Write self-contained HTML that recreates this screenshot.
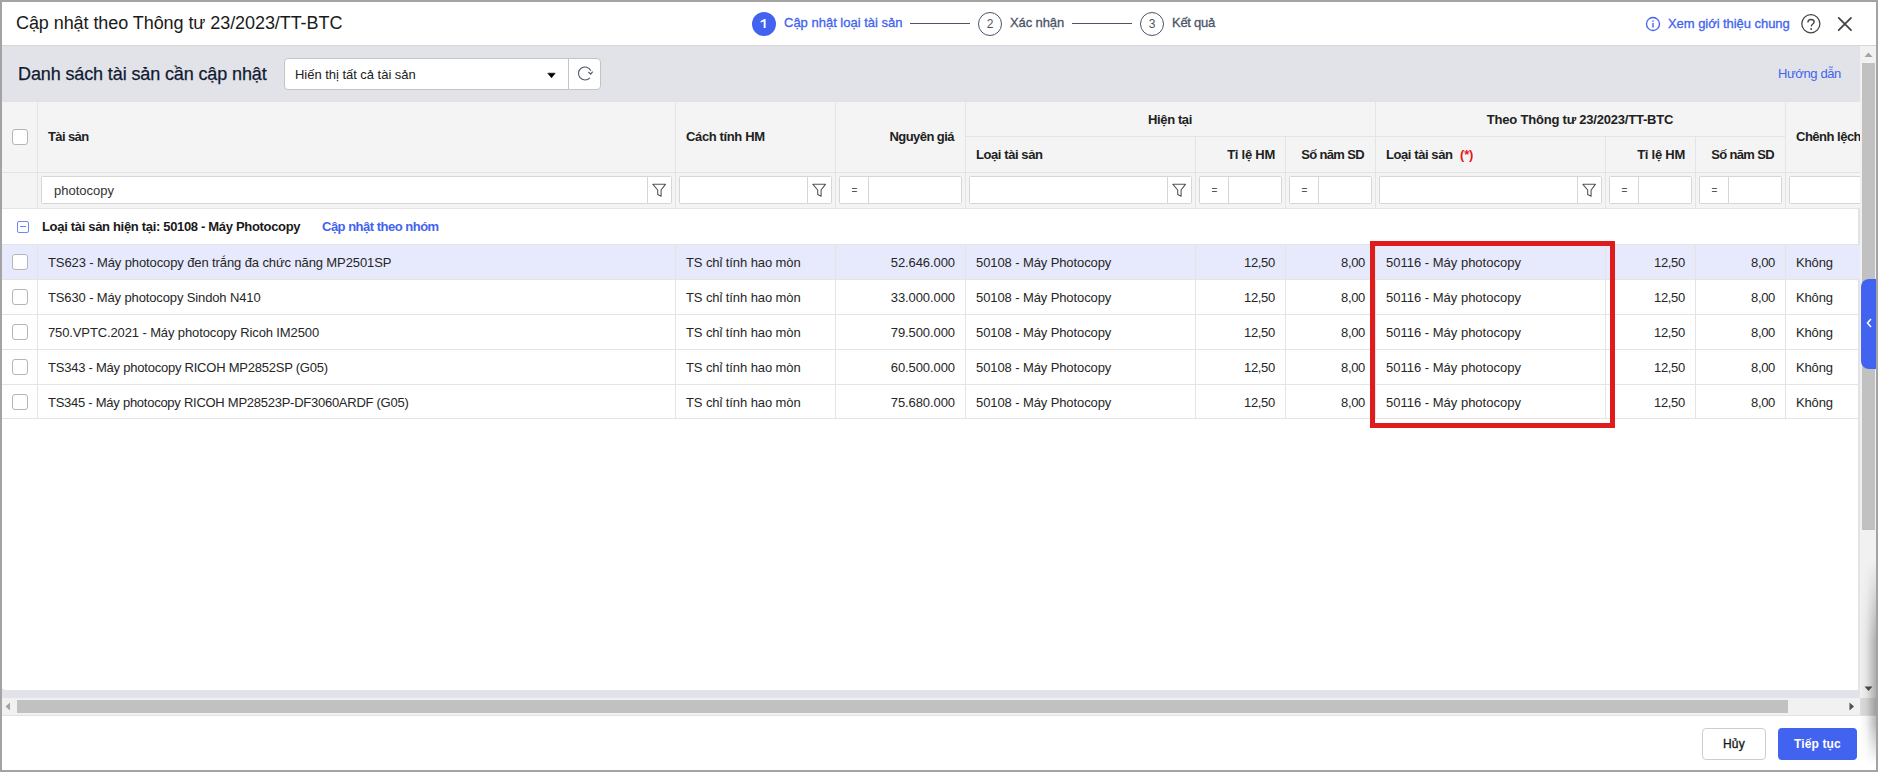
<!DOCTYPE html>
<html><head><meta charset="utf-8"><style>
html,body{margin:0;padding:0;}
body{width:1878px;height:772px;position:relative;overflow:hidden;background:#a3a3a3;font-family:'Liberation Sans', sans-serif;}
.t{position:absolute;white-space:nowrap;}
</style></head><body>

<div style="position:absolute;left:2px;top:2px;width:1874px;height:768px;background:#fff;"></div>
<div style="position:absolute;left:2px;top:45px;width:1874px;height:1px;background:#d6d6d6;"></div>
<div style="position:absolute;left:2px;top:46px;width:1858px;height:652px;background:#e1e3e8;"></div>
<div class="t" style="left:16px;top:14.36px;font-size:18px;line-height:18px;font-weight:400;color:#1a1a1a;letter-spacing:-0.07px;">Cập nhật theo Thông tư 23/2023/TT-BTC</div>
<div style="position:absolute;left:752px;top:12px;width:24px;height:24px;border-radius:50%;background:#4263ef;"></div>
<svg style="position:absolute;left:752px;top:12px" width="24" height="24" viewBox="752 12 24 24"><path d="M760.6 21.1 L764.3 19 L765.6 19 L765.6 27.9 L763.7 27.9 L763.7 21.4 L760.6 22.6 Z" fill="#fff"/></svg>
<div class="t" style="left:784px;top:15.80px;font-size:13px;line-height:13px;font-weight:400;color:#4263ef;-webkit-text-stroke:0.3px #4263ef;">Cập nhật loại tài sản</div>
<div style="position:absolute;left:910px;top:23px;width:60px;height:1px;background:#4b5566;"></div>
<div style="position:absolute;left:978px;top:12px;width:22px;height:22px;border-radius:50%;border:1px solid #4b5566;"></div>
<div class="t" style="left:990px;transform:translateX(-50%);top:17.84px;font-size:12px;line-height:12px;font-weight:400;color:#4b5566;">2</div>
<div class="t" style="left:1010px;top:15.80px;font-size:13px;line-height:13px;font-weight:400;color:#4b5468;letter-spacing:-0.1px;-webkit-text-stroke:0.3px #4b5468;">Xác nhận</div>
<div style="position:absolute;left:1072px;top:23px;width:60px;height:1px;background:#4b5566;"></div>
<div style="position:absolute;left:1140px;top:12px;width:22px;height:22px;border-radius:50%;border:1px solid #4b5566;"></div>
<div class="t" style="left:1152px;transform:translateX(-50%);top:17.84px;font-size:12px;line-height:12px;font-weight:400;color:#4b5566;">3</div>
<div class="t" style="left:1172px;top:15.80px;font-size:13px;line-height:13px;font-weight:400;color:#4b5468;letter-spacing:-0.27px;-webkit-text-stroke:0.3px #4b5468;">Kết quả</div>
<svg style="position:absolute;left:1645px;top:16px" width="16" height="16" viewBox="0 0 16 16"><circle cx="8" cy="8" r="6.5" fill="none" stroke="#4263ef" stroke-width="1.3"/><rect x="7.3" y="7" width="1.4" height="4.5" fill="#4263ef"/><circle cx="8" cy="5" r="0.85" fill="#4263ef"/></svg>
<div class="t" style="left:1668px;top:16.80px;font-size:13px;line-height:13px;font-weight:400;color:#4263ef;letter-spacing:-0.05px;-webkit-text-stroke:0.3px #4263ef;">Xem giới thiệu chung</div>
<svg style="position:absolute;left:1800px;top:13px" width="22" height="22" viewBox="0 0 22 22"><circle cx="10.85" cy="10.75" r="9.05" fill="none" stroke="#444" stroke-width="1.3"/><path d="M7.9 9.6 C7.9 7.6 9.3 6.5 11 6.5 C12.8 6.5 14.1 7.6 14.1 9 C14.1 10.9 11.3 11.1 11.3 13.4" fill="none" stroke="#444" stroke-width="1.35"/><circle cx="11.15" cy="16" r="0.95" fill="#444"/></svg>
<svg style="position:absolute;left:1836px;top:16px" width="18" height="16" viewBox="0 0 18 16"><path d="M2.7 1.9 L15.0 14.2 M15.0 1.9 L2.7 14.2" stroke="#444" stroke-width="1.8" stroke-linecap="round"/></svg>
<div class="t" style="left:18px;top:64.56px;font-size:18px;line-height:18px;font-weight:400;color:#111a33;letter-spacing:-0.12px;-webkit-text-stroke:0.25px #111a33;">Danh sách tài sản cần cập nhật</div>
<div style="position:absolute;left:284px;top:58px;width:315px;height:30px;border:1px solid #c4c4c4;border-radius:4px;background:#fff;"></div>
<div style="position:absolute;left:568px;top:59px;width:1px;height:30px;background:#c4c4c4;"></div>
<div class="t" style="left:295px;top:68.10px;font-size:13px;line-height:13px;font-weight:400;color:#212121;letter-spacing:-0.03px;">Hiến thị tất cả tài sản</div>
<svg style="position:absolute;left:546px;top:72px" width="11" height="7" viewBox="0 0 11 7"><path d="M1.8 1.2 L9.2 1.2 L5.5 5.8 Z" fill="#000" stroke="#000" stroke-width="0.6" stroke-linejoin="round"/></svg>
<svg style="position:absolute;left:576px;top:65px" width="18" height="18" viewBox="0 0 18 18"><path d="M13.83 12.85 A6.5 6.5 0 1 1 14.89 5.75" fill="none" stroke="#4b5566" stroke-width="1.1"/><path d="M12.4 7 L14.7 9.2 L16.7 6.6" fill="none" stroke="#4b5566" stroke-width="1.1"/></svg>
<div class="t" style="left:1778px;top:66.70px;font-size:13px;line-height:13px;font-weight:400;color:#4263ef;letter-spacing:-0.38px;">Hướng dẫn</div>
<div style="position:absolute;left:2px;top:102px;width:1858px;height:588px;background:#fff;border-radius:0 0 4px 4px;overflow:hidden;">
<div style="position:absolute;left:1856px;top:107px;width:2px;height:481px;background:#e1e3e8;"></div>
<div style="position:absolute;left:0px;top:0px;width:1858px;height:106px;background:#f4f4f4;"></div>
<div style="position:absolute;left:0px;top:70px;width:1858px;height:1px;background:#e4e4e4;"></div>
<div style="position:absolute;left:0px;top:106px;width:1858px;height:1px;background:#e4e4e4;"></div>
<div style="position:absolute;left:963px;top:34px;width:820px;height:1px;background:#e4e4e4;"></div>
<div style="position:absolute;left:35px;top:0px;width:1px;height:106px;background:#e4e4e4;"></div>
<div style="position:absolute;left:673px;top:0px;width:1px;height:106px;background:#e4e4e4;"></div>
<div style="position:absolute;left:833px;top:0px;width:1px;height:106px;background:#e4e4e4;"></div>
<div style="position:absolute;left:963px;top:0px;width:1px;height:106px;background:#e4e4e4;"></div>
<div style="position:absolute;left:1193px;top:35px;width:1px;height:71px;background:#e4e4e4;"></div>
<div style="position:absolute;left:1283px;top:35px;width:1px;height:71px;background:#e4e4e4;"></div>
<div style="position:absolute;left:1373px;top:0px;width:1px;height:106px;background:#e4e4e4;"></div>
<div style="position:absolute;left:1603px;top:35px;width:1px;height:71px;background:#e4e4e4;"></div>
<div style="position:absolute;left:1693px;top:35px;width:1px;height:71px;background:#e4e4e4;"></div>
<div style="position:absolute;left:1783px;top:0px;width:1px;height:106px;background:#e4e4e4;"></div>
<div style="position:absolute;left:10px;top:27px;width:14px;height:14px;border:1px solid #b5b5b5;border-radius:3px;background:#fff;"></div>
<div class="t" style="left:46px;top:28.00px;font-size:13px;line-height:13px;font-weight:700;color:#212121;letter-spacing:-0.6px;">Tài sản</div>
<div class="t" style="left:684px;top:28.40px;font-size:13px;line-height:13px;font-weight:700;color:#212121;letter-spacing:-0.37px;">Cách tính HM</div>
<div class="t" style="right:906px;top:28.40px;font-size:13px;line-height:13px;font-weight:700;color:#212121;letter-spacing:-0.55px;">Nguyên giá</div>
<div class="t" style="left:1168px;transform:translateX(-50%);top:11.30px;font-size:13px;line-height:13px;font-weight:700;color:#212121;letter-spacing:-0.4px;">Hiện tại</div>
<div class="t" style="left:974px;top:46.40px;font-size:13px;line-height:13px;font-weight:700;color:#212121;letter-spacing:-0.42px;">Loại tài sản</div>
<div class="t" style="right:585px;top:46.40px;font-size:13px;line-height:13px;font-weight:700;color:#212121;letter-spacing:-0.25px;">Tỉ lệ HM</div>
<div class="t" style="right:496px;top:46.40px;font-size:13px;line-height:13px;font-weight:700;color:#212121;letter-spacing:-0.65px;">Số năm SD</div>
<div class="t" style="left:1578px;transform:translateX(-50%);top:11.30px;font-size:13px;line-height:13px;font-weight:700;color:#212121;letter-spacing:-0.21px;">Theo Thông tư 23/2023/TT-BTC</div>
<div class="t" style="left:1384px;top:46.40px;font-size:13px;line-height:13px;font-weight:700;color:#212121;letter-spacing:-0.42px;">Loại tài sản</div>
<div class="t" style="left:1458px;top:46.40px;font-size:13px;line-height:13px;font-weight:700;color:#e8141b;letter-spacing:-0.2px;">(*)</div>
<div class="t" style="right:175px;top:46.40px;font-size:13px;line-height:13px;font-weight:700;color:#212121;letter-spacing:-0.25px;">Tỉ lệ HM</div>
<div class="t" style="right:86px;top:46.40px;font-size:13px;line-height:13px;font-weight:700;color:#212121;letter-spacing:-0.65px;">Số năm SD</div>
<div class="t" style="left:1794px;top:28.00px;font-size:13px;line-height:13px;font-weight:700;color:#212121;letter-spacing:-0.5px;">Chênh lệch</div>
<div style="position:absolute;left:39px;top:74px;width:629px;height:26px;border:1px solid #d6d6d6;border-radius:1.5px;background:#fff;"></div>
<div style="position:absolute;left:645px;top:75px;width:1px;height:26px;background:#d6d6d6;"></div>
<svg style="position:absolute;left:650px;top:80px" width="16" height="16" viewBox="0 0 16 16"><path d="M0.9 2.3 L13.4 2.3 L9.1 8 L9.1 14.2 L5.7 12.6 L5.7 8 Z" fill="none" stroke="#555" stroke-width="1.1" stroke-linejoin="round"/></svg>
<div style="position:absolute;left:677px;top:74px;width:151px;height:26px;border:1px solid #d6d6d6;border-radius:1.5px;background:#fff;"></div>
<div style="position:absolute;left:805px;top:75px;width:1px;height:26px;background:#d6d6d6;"></div>
<svg style="position:absolute;left:810px;top:80px" width="16" height="16" viewBox="0 0 16 16"><path d="M0.9 2.3 L13.4 2.3 L9.1 8 L9.1 14.2 L5.7 12.6 L5.7 8 Z" fill="none" stroke="#555" stroke-width="1.1" stroke-linejoin="round"/></svg>
<div style="position:absolute;left:837px;top:74px;width:121px;height:26px;border:1px solid #d6d6d6;border-radius:1.5px;background:#fff;"></div>
<div style="position:absolute;left:866px;top:75px;width:1px;height:26px;background:#d6d6d6;"></div>
<div class="t" style="left:852.3px;transform:translateX(-50%);top:84.13px;font-size:10px;line-height:10px;font-weight:400;color:#555;">=</div>
<div style="position:absolute;left:967px;top:74px;width:221px;height:26px;border:1px solid #d6d6d6;border-radius:1.5px;background:#fff;"></div>
<div style="position:absolute;left:1165px;top:75px;width:1px;height:26px;background:#d6d6d6;"></div>
<svg style="position:absolute;left:1170px;top:80px" width="16" height="16" viewBox="0 0 16 16"><path d="M0.9 2.3 L13.4 2.3 L9.1 8 L9.1 14.2 L5.7 12.6 L5.7 8 Z" fill="none" stroke="#555" stroke-width="1.1" stroke-linejoin="round"/></svg>
<div style="position:absolute;left:1197px;top:74px;width:81px;height:26px;border:1px solid #d6d6d6;border-radius:1.5px;background:#fff;"></div>
<div style="position:absolute;left:1226px;top:75px;width:1px;height:26px;background:#d6d6d6;"></div>
<div class="t" style="left:1212.3px;transform:translateX(-50%);top:84.13px;font-size:10px;line-height:10px;font-weight:400;color:#555;">=</div>
<div style="position:absolute;left:1287px;top:74px;width:81px;height:26px;border:1px solid #d6d6d6;border-radius:1.5px;background:#fff;"></div>
<div style="position:absolute;left:1316px;top:75px;width:1px;height:26px;background:#d6d6d6;"></div>
<div class="t" style="left:1302.3px;transform:translateX(-50%);top:84.13px;font-size:10px;line-height:10px;font-weight:400;color:#555;">=</div>
<div style="position:absolute;left:1377px;top:74px;width:221px;height:26px;border:1px solid #d6d6d6;border-radius:1.5px;background:#fff;"></div>
<div style="position:absolute;left:1575px;top:75px;width:1px;height:26px;background:#d6d6d6;"></div>
<svg style="position:absolute;left:1580px;top:80px" width="16" height="16" viewBox="0 0 16 16"><path d="M0.9 2.3 L13.4 2.3 L9.1 8 L9.1 14.2 L5.7 12.6 L5.7 8 Z" fill="none" stroke="#555" stroke-width="1.1" stroke-linejoin="round"/></svg>
<div style="position:absolute;left:1607px;top:74px;width:81px;height:26px;border:1px solid #d6d6d6;border-radius:1.5px;background:#fff;"></div>
<div style="position:absolute;left:1636px;top:75px;width:1px;height:26px;background:#d6d6d6;"></div>
<div class="t" style="left:1622.3px;transform:translateX(-50%);top:84.13px;font-size:10px;line-height:10px;font-weight:400;color:#555;">=</div>
<div style="position:absolute;left:1697px;top:74px;width:81px;height:26px;border:1px solid #d6d6d6;border-radius:1.5px;background:#fff;"></div>
<div style="position:absolute;left:1726px;top:75px;width:1px;height:26px;background:#d6d6d6;"></div>
<div class="t" style="left:1712.3px;transform:translateX(-50%);top:84.13px;font-size:10px;line-height:10px;font-weight:400;color:#555;">=</div>
<div style="position:absolute;left:1787px;top:74px;width:90px;height:26px;border:1px solid #d6d6d6;border-radius:1.5px;background:#fff;"></div>
<div class="t" style="left:52px;top:81.50px;font-size:13px;line-height:13px;font-weight:400;color:#333;">photocopy</div>
<div style="position:absolute;left:15px;top:119px;width:10px;height:10px;border:1px solid #7088f0;border-radius:2px;"></div>
<div style="position:absolute;left:18px;top:124px;width:6px;height:1px;background:#6a82ef;"></div>
<div class="t" style="left:40px;top:117.50px;font-size:13px;line-height:13px;font-weight:700;color:#1a1a1a;letter-spacing:-0.32px;">Loại tài sản hiện tại: 50108 - Máy Photocopy</div>
<div class="t" style="left:320px;top:117.50px;font-size:13px;line-height:13px;font-weight:700;color:#4263ef;letter-spacing:-0.5px;">Cập nhật theo nhóm</div>
<div style="position:absolute;left:0px;top:142px;width:1858px;height:1px;background:#e4e4e4;"></div>
<div style="position:absolute;left:0px;top:143px;width:1858px;height:34px;background:#e7eafd;"></div>
<div style="position:absolute;left:0px;top:177px;width:1858px;height:1px;background:#e4e4e4;"></div>
<div style="position:absolute;left:35px;top:143px;width:1px;height:34px;background:#e4e4e4;"></div>
<div style="position:absolute;left:673px;top:143px;width:1px;height:34px;background:#e4e4e4;"></div>
<div style="position:absolute;left:833px;top:143px;width:1px;height:34px;background:#e4e4e4;"></div>
<div style="position:absolute;left:963px;top:143px;width:1px;height:34px;background:#e4e4e4;"></div>
<div style="position:absolute;left:1193px;top:143px;width:1px;height:34px;background:#e4e4e4;"></div>
<div style="position:absolute;left:1283px;top:143px;width:1px;height:34px;background:#e4e4e4;"></div>
<div style="position:absolute;left:1373px;top:143px;width:1px;height:34px;background:#e4e4e4;"></div>
<div style="position:absolute;left:1603px;top:143px;width:1px;height:34px;background:#e4e4e4;"></div>
<div style="position:absolute;left:1693px;top:143px;width:1px;height:34px;background:#e4e4e4;"></div>
<div style="position:absolute;left:1783px;top:143px;width:1px;height:34px;background:#e4e4e4;"></div>
<div style="position:absolute;left:10px;top:152px;width:14px;height:14px;border:1px solid #b5b5b5;border-radius:3px;background:#fff;"></div>
<div class="t" style="left:46px;top:154.10px;font-size:13px;line-height:13px;font-weight:400;color:#262626;letter-spacing:-0.11px;">TS623 - Máy photocopy đen trắng đa chức năng MP2501SP</div>
<div class="t" style="left:684px;top:154.10px;font-size:13px;line-height:13px;font-weight:400;color:#262626;letter-spacing:-0.09px;">TS chỉ tính hao mòn</div>
<div class="t" style="right:905px;top:154.10px;font-size:13px;line-height:13px;font-weight:400;color:#262626;letter-spacing:-0.08px;">52.646.000</div>
<div class="t" style="left:974px;top:154.10px;font-size:13px;line-height:13px;font-weight:400;color:#262626;letter-spacing:-0.1px;">50108 - Máy Photocopy</div>
<div class="t" style="right:585px;top:154.10px;font-size:13px;line-height:13px;font-weight:400;color:#262626;letter-spacing:-0.3px;">12,50</div>
<div class="t" style="right:495px;top:154.10px;font-size:13px;line-height:13px;font-weight:400;color:#262626;letter-spacing:-0.35px;">8,00</div>
<div class="t" style="left:1384px;top:154.10px;font-size:13px;line-height:13px;font-weight:400;color:#262626;">50116 - Máy photocopy</div>
<div class="t" style="right:175px;top:154.10px;font-size:13px;line-height:13px;font-weight:400;color:#262626;letter-spacing:-0.3px;">12,50</div>
<div class="t" style="right:85px;top:154.10px;font-size:13px;line-height:13px;font-weight:400;color:#262626;letter-spacing:-0.35px;">8,00</div>
<div class="t" style="left:1794px;top:154.10px;font-size:13px;line-height:13px;font-weight:400;color:#262626;letter-spacing:-0.15px;">Không</div>
<div style="position:absolute;left:0px;top:212px;width:1858px;height:1px;background:#e4e4e4;"></div>
<div style="position:absolute;left:35px;top:178px;width:1px;height:34px;background:#e4e4e4;"></div>
<div style="position:absolute;left:673px;top:178px;width:1px;height:34px;background:#e4e4e4;"></div>
<div style="position:absolute;left:833px;top:178px;width:1px;height:34px;background:#e4e4e4;"></div>
<div style="position:absolute;left:963px;top:178px;width:1px;height:34px;background:#e4e4e4;"></div>
<div style="position:absolute;left:1193px;top:178px;width:1px;height:34px;background:#e4e4e4;"></div>
<div style="position:absolute;left:1283px;top:178px;width:1px;height:34px;background:#e4e4e4;"></div>
<div style="position:absolute;left:1373px;top:178px;width:1px;height:34px;background:#e4e4e4;"></div>
<div style="position:absolute;left:1603px;top:178px;width:1px;height:34px;background:#e4e4e4;"></div>
<div style="position:absolute;left:1693px;top:178px;width:1px;height:34px;background:#e4e4e4;"></div>
<div style="position:absolute;left:1783px;top:178px;width:1px;height:34px;background:#e4e4e4;"></div>
<div style="position:absolute;left:10px;top:187px;width:14px;height:14px;border:1px solid #b5b5b5;border-radius:3px;background:#fff;"></div>
<div class="t" style="left:46px;top:189.10px;font-size:13px;line-height:13px;font-weight:400;color:#262626;letter-spacing:-0.13px;">TS630 - Máy photocopy Sindoh N410</div>
<div class="t" style="left:684px;top:189.10px;font-size:13px;line-height:13px;font-weight:400;color:#262626;letter-spacing:-0.09px;">TS chỉ tính hao mòn</div>
<div class="t" style="right:905px;top:189.10px;font-size:13px;line-height:13px;font-weight:400;color:#262626;letter-spacing:-0.08px;">33.000.000</div>
<div class="t" style="left:974px;top:189.10px;font-size:13px;line-height:13px;font-weight:400;color:#262626;letter-spacing:-0.1px;">50108 - Máy Photocopy</div>
<div class="t" style="right:585px;top:189.10px;font-size:13px;line-height:13px;font-weight:400;color:#262626;letter-spacing:-0.3px;">12,50</div>
<div class="t" style="right:495px;top:189.10px;font-size:13px;line-height:13px;font-weight:400;color:#262626;letter-spacing:-0.35px;">8,00</div>
<div class="t" style="left:1384px;top:189.10px;font-size:13px;line-height:13px;font-weight:400;color:#262626;">50116 - Máy photocopy</div>
<div class="t" style="right:175px;top:189.10px;font-size:13px;line-height:13px;font-weight:400;color:#262626;letter-spacing:-0.3px;">12,50</div>
<div class="t" style="right:85px;top:189.10px;font-size:13px;line-height:13px;font-weight:400;color:#262626;letter-spacing:-0.35px;">8,00</div>
<div class="t" style="left:1794px;top:189.10px;font-size:13px;line-height:13px;font-weight:400;color:#262626;letter-spacing:-0.15px;">Không</div>
<div style="position:absolute;left:0px;top:247px;width:1858px;height:1px;background:#e4e4e4;"></div>
<div style="position:absolute;left:35px;top:213px;width:1px;height:34px;background:#e4e4e4;"></div>
<div style="position:absolute;left:673px;top:213px;width:1px;height:34px;background:#e4e4e4;"></div>
<div style="position:absolute;left:833px;top:213px;width:1px;height:34px;background:#e4e4e4;"></div>
<div style="position:absolute;left:963px;top:213px;width:1px;height:34px;background:#e4e4e4;"></div>
<div style="position:absolute;left:1193px;top:213px;width:1px;height:34px;background:#e4e4e4;"></div>
<div style="position:absolute;left:1283px;top:213px;width:1px;height:34px;background:#e4e4e4;"></div>
<div style="position:absolute;left:1373px;top:213px;width:1px;height:34px;background:#e4e4e4;"></div>
<div style="position:absolute;left:1603px;top:213px;width:1px;height:34px;background:#e4e4e4;"></div>
<div style="position:absolute;left:1693px;top:213px;width:1px;height:34px;background:#e4e4e4;"></div>
<div style="position:absolute;left:1783px;top:213px;width:1px;height:34px;background:#e4e4e4;"></div>
<div style="position:absolute;left:10px;top:222px;width:14px;height:14px;border:1px solid #b5b5b5;border-radius:3px;background:#fff;"></div>
<div class="t" style="left:46px;top:224.10px;font-size:13px;line-height:13px;font-weight:400;color:#262626;letter-spacing:-0.12px;">750.VPTC.2021 - Máy photocopy Ricoh IM2500</div>
<div class="t" style="left:684px;top:224.10px;font-size:13px;line-height:13px;font-weight:400;color:#262626;letter-spacing:-0.09px;">TS chỉ tính hao mòn</div>
<div class="t" style="right:905px;top:224.10px;font-size:13px;line-height:13px;font-weight:400;color:#262626;letter-spacing:-0.08px;">79.500.000</div>
<div class="t" style="left:974px;top:224.10px;font-size:13px;line-height:13px;font-weight:400;color:#262626;letter-spacing:-0.1px;">50108 - Máy Photocopy</div>
<div class="t" style="right:585px;top:224.10px;font-size:13px;line-height:13px;font-weight:400;color:#262626;letter-spacing:-0.3px;">12,50</div>
<div class="t" style="right:495px;top:224.10px;font-size:13px;line-height:13px;font-weight:400;color:#262626;letter-spacing:-0.35px;">8,00</div>
<div class="t" style="left:1384px;top:224.10px;font-size:13px;line-height:13px;font-weight:400;color:#262626;">50116 - Máy photocopy</div>
<div class="t" style="right:175px;top:224.10px;font-size:13px;line-height:13px;font-weight:400;color:#262626;letter-spacing:-0.3px;">12,50</div>
<div class="t" style="right:85px;top:224.10px;font-size:13px;line-height:13px;font-weight:400;color:#262626;letter-spacing:-0.35px;">8,00</div>
<div class="t" style="left:1794px;top:224.10px;font-size:13px;line-height:13px;font-weight:400;color:#262626;letter-spacing:-0.15px;">Không</div>
<div style="position:absolute;left:0px;top:282px;width:1858px;height:1px;background:#e4e4e4;"></div>
<div style="position:absolute;left:35px;top:248px;width:1px;height:34px;background:#e4e4e4;"></div>
<div style="position:absolute;left:673px;top:248px;width:1px;height:34px;background:#e4e4e4;"></div>
<div style="position:absolute;left:833px;top:248px;width:1px;height:34px;background:#e4e4e4;"></div>
<div style="position:absolute;left:963px;top:248px;width:1px;height:34px;background:#e4e4e4;"></div>
<div style="position:absolute;left:1193px;top:248px;width:1px;height:34px;background:#e4e4e4;"></div>
<div style="position:absolute;left:1283px;top:248px;width:1px;height:34px;background:#e4e4e4;"></div>
<div style="position:absolute;left:1373px;top:248px;width:1px;height:34px;background:#e4e4e4;"></div>
<div style="position:absolute;left:1603px;top:248px;width:1px;height:34px;background:#e4e4e4;"></div>
<div style="position:absolute;left:1693px;top:248px;width:1px;height:34px;background:#e4e4e4;"></div>
<div style="position:absolute;left:1783px;top:248px;width:1px;height:34px;background:#e4e4e4;"></div>
<div style="position:absolute;left:10px;top:257px;width:14px;height:14px;border:1px solid #b5b5b5;border-radius:3px;background:#fff;"></div>
<div class="t" style="left:46px;top:259.10px;font-size:13px;line-height:13px;font-weight:400;color:#262626;letter-spacing:-0.23px;">TS343 - Máy photocopy RICOH MP2852SP (G05)</div>
<div class="t" style="left:684px;top:259.10px;font-size:13px;line-height:13px;font-weight:400;color:#262626;letter-spacing:-0.09px;">TS chỉ tính hao mòn</div>
<div class="t" style="right:905px;top:259.10px;font-size:13px;line-height:13px;font-weight:400;color:#262626;letter-spacing:-0.08px;">60.500.000</div>
<div class="t" style="left:974px;top:259.10px;font-size:13px;line-height:13px;font-weight:400;color:#262626;letter-spacing:-0.1px;">50108 - Máy Photocopy</div>
<div class="t" style="right:585px;top:259.10px;font-size:13px;line-height:13px;font-weight:400;color:#262626;letter-spacing:-0.3px;">12,50</div>
<div class="t" style="right:495px;top:259.10px;font-size:13px;line-height:13px;font-weight:400;color:#262626;letter-spacing:-0.35px;">8,00</div>
<div class="t" style="left:1384px;top:259.10px;font-size:13px;line-height:13px;font-weight:400;color:#262626;">50116 - Máy photocopy</div>
<div class="t" style="right:175px;top:259.10px;font-size:13px;line-height:13px;font-weight:400;color:#262626;letter-spacing:-0.3px;">12,50</div>
<div class="t" style="right:85px;top:259.10px;font-size:13px;line-height:13px;font-weight:400;color:#262626;letter-spacing:-0.35px;">8,00</div>
<div class="t" style="left:1794px;top:259.10px;font-size:13px;line-height:13px;font-weight:400;color:#262626;letter-spacing:-0.15px;">Không</div>
<div style="position:absolute;left:0px;top:316px;width:1858px;height:1px;background:#e4e4e4;"></div>
<div style="position:absolute;left:35px;top:283px;width:1px;height:33px;background:#e4e4e4;"></div>
<div style="position:absolute;left:673px;top:283px;width:1px;height:33px;background:#e4e4e4;"></div>
<div style="position:absolute;left:833px;top:283px;width:1px;height:33px;background:#e4e4e4;"></div>
<div style="position:absolute;left:963px;top:283px;width:1px;height:33px;background:#e4e4e4;"></div>
<div style="position:absolute;left:1193px;top:283px;width:1px;height:33px;background:#e4e4e4;"></div>
<div style="position:absolute;left:1283px;top:283px;width:1px;height:33px;background:#e4e4e4;"></div>
<div style="position:absolute;left:1373px;top:283px;width:1px;height:33px;background:#e4e4e4;"></div>
<div style="position:absolute;left:1603px;top:283px;width:1px;height:33px;background:#e4e4e4;"></div>
<div style="position:absolute;left:1693px;top:283px;width:1px;height:33px;background:#e4e4e4;"></div>
<div style="position:absolute;left:1783px;top:283px;width:1px;height:33px;background:#e4e4e4;"></div>
<div style="position:absolute;left:10px;top:292px;width:14px;height:14px;border:1px solid #b5b5b5;border-radius:3px;background:#fff;"></div>
<div class="t" style="left:46px;top:294.10px;font-size:13px;line-height:13px;font-weight:400;color:#262626;letter-spacing:-0.26px;">TS345 - Máy photocopy RICOH MP28523P-DF3060ARDF (G05)</div>
<div class="t" style="left:684px;top:294.10px;font-size:13px;line-height:13px;font-weight:400;color:#262626;letter-spacing:-0.09px;">TS chỉ tính hao mòn</div>
<div class="t" style="right:905px;top:294.10px;font-size:13px;line-height:13px;font-weight:400;color:#262626;letter-spacing:-0.08px;">75.680.000</div>
<div class="t" style="left:974px;top:294.10px;font-size:13px;line-height:13px;font-weight:400;color:#262626;letter-spacing:-0.1px;">50108 - Máy Photocopy</div>
<div class="t" style="right:585px;top:294.10px;font-size:13px;line-height:13px;font-weight:400;color:#262626;letter-spacing:-0.3px;">12,50</div>
<div class="t" style="right:495px;top:294.10px;font-size:13px;line-height:13px;font-weight:400;color:#262626;letter-spacing:-0.35px;">8,00</div>
<div class="t" style="left:1384px;top:294.10px;font-size:13px;line-height:13px;font-weight:400;color:#262626;">50116 - Máy photocopy</div>
<div class="t" style="right:175px;top:294.10px;font-size:13px;line-height:13px;font-weight:400;color:#262626;letter-spacing:-0.3px;">12,50</div>
<div class="t" style="right:85px;top:294.10px;font-size:13px;line-height:13px;font-weight:400;color:#262626;letter-spacing:-0.35px;">8,00</div>
<div class="t" style="left:1794px;top:294.10px;font-size:13px;line-height:13px;font-weight:400;color:#262626;letter-spacing:-0.15px;">Không</div>
</div>
<div style="position:absolute;left:1370px;top:241px;width:235px;height:177px;border:5px solid #e01b1b;"></div>
<div style="position:absolute;left:1860px;top:46px;width:16px;height:669px;background:#f1f1f1;"></div>
<div style="position:absolute;left:1862px;top:63px;width:13px;height:467px;background:#c1c1c1;"></div>
<svg style="position:absolute;left:1864px;top:52px" width="9" height="6"><path d="M0.5 5 L8.5 5 L4.5 0.5 Z" fill="#a3a3a3"/></svg>
<svg style="position:absolute;left:1864px;top:686px" width="9" height="6"><path d="M0.5 0.5 L8.5 0.5 L4.5 5 Z" fill="#505050"/></svg>
<div style="position:absolute;left:2px;top:698px;width:1858px;height:17px;background:#f1f1f1;"></div>
<div style="position:absolute;left:17px;top:700px;width:1771px;height:13px;background:#c1c1c1;"></div>
<svg style="position:absolute;left:5px;top:702px" width="6" height="9"><path d="M5 0.5 L5 8.5 L0.5 4.5 Z" fill="#a3a3a3"/></svg>
<svg style="position:absolute;left:1849px;top:702px" width="6" height="9"><path d="M0.5 0.5 L0.5 8.5 L5 4.5 Z" fill="#505050"/></svg>
<div style="position:absolute;left:1860px;top:698px;width:16px;height:17px;background:#dcdcdc;"></div>
<div style="position:absolute;left:2px;top:715px;width:1874px;height:1px;background:#e1e3e8;"></div>
<div style="position:absolute;left:1861px;top:279px;width:15px;height:90px;background:#4263ef;border-radius:8px 0 0 8px;"></div>
<svg style="position:absolute;left:1865px;top:318px" width="8" height="10"><path d="M6 1 L2.5 5 L6 9" fill="none" stroke="#fff" stroke-width="1.5"/></svg>
<div style="position:absolute;left:1860px;top:560px;width:16px;height:205px;background:linear-gradient(to right, rgba(0,0,0,0) 0%, rgba(0,0,0,0.05) 40%, rgba(0,0,0,0.28) 100%);-webkit-mask-image:linear-gradient(to bottom, transparent 0%, black 40%, black 80%, transparent 100%);"></div>
<div style="position:absolute;left:1702px;top:728px;width:62px;height:30px;border:1px solid #c9cdd6;border-radius:4px;background:#fff;"></div>
<div class="t" style="left:1723px;top:737.64px;font-size:12px;line-height:12px;font-weight:400;color:#1a1a1a;letter-spacing:0.2px;-webkit-text-stroke:0.35px #1a1a1a;">Hủy</div>
<div style="position:absolute;left:1778px;top:728px;width:79px;height:32px;border-radius:4px;background:#4263ef;"></div>
<div class="t" style="left:1794px;top:737.64px;font-size:12px;line-height:12px;font-weight:700;color:#fff;letter-spacing:0.14px;">Tiếp tục</div>
</body></html>
